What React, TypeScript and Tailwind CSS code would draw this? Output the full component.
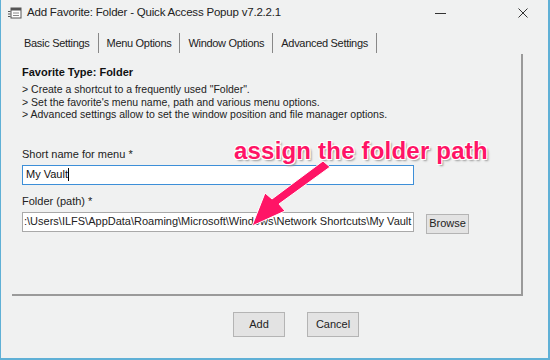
import React from 'react';

const font = { fontFamily: '"Liberation Sans", Arial, sans-serif' };

function TitleBar() {
  return (
    <div className="flex items-center h-[26px] pl-[7px] pr-[20px]">
      <svg width="14" height="12" viewBox="0 0 14 12" className="mr-[5px]">
        <rect x="3" y="1" width="10" height="10" fill="#fff" stroke="#555" strokeWidth="1" />
        <rect x="3" y="1" width="10" height="2.5" fill="#555" />
        <line x1="0" y1="4.5" x2="2.5" y2="4.5" stroke="#555" />
        <line x1="0" y1="7" x2="2.5" y2="7" stroke="#555" />
        <line x1="0" y1="9.5" x2="2.5" y2="9.5" stroke="#555" />
        <line x1="5" y1="6" x2="11" y2="6" stroke="#888" />
        <line x1="5" y1="8.5" x2="11" y2="8.5" stroke="#888" />
      </svg>
      <span className="text-[11.5px] text-[#222] tracking-[-0.2px]">Add Favorite: Folder - Quick Access Popup v7.2.2.1</span>
      <div className="flex-1" />
      <div className="w-[11px] h-px bg-[#333] mr-[72px]" />
      <svg width="10" height="10" viewBox="0 0 10 10">
        <path d="M0.5 0.5 L9.5 9.5 M9.5 0.5 L0.5 9.5" stroke="#333" strokeWidth="1" />
      </svg>
    </div>
  );
}

function Tabs() {
  const tabs = ['Basic Settings', 'Menu Options', 'Window Options', 'Advanced Settings'];
  return (
    <div className="flex items-center h-[28px] pt-[6px] pl-[23px]">
      {tabs.map((t) => (
        <div key={t} className="flex items-center">
          <span className="text-[11px] text-[#222] tracking-[-0.3px]">{t}</span>
          <div className="w-px h-[20px] bg-[#888] mx-[8px]" />
        </div>
      ))}
    </div>
  );
}

function Button({ label, w }: { label: string; w: string }) {
  return (
    <div className={`${w} h-[25px] flex items-center justify-center border border-[#b4b4b4] bg-[#e3e3e3] text-[11px] text-[#222]`}>
      {label}
    </div>
  );
}

export default function App() {
  return (
    <div className="relative w-[550px] h-[360px] bg-[#f0f1f1] border-l border-r-2 border-b-2 border-[#5fb0d6] overflow-hidden" style={font}>
      <TitleBar />
      <Tabs />
      <div className="ml-[11px] w-[511px] h-[242px] border-r-2 border-b-2 border-[#9a9a9a] pl-[10px] pt-[11px]">
        <div className="text-[11px] font-bold text-[#111] leading-[14px]">Favorite Type: Folder</div>
        <div className="mt-[4px] text-[10.5px] text-[#222] leading-[12.5px]">
          <div>&gt; Create a shortcut to a frequently used "Folder".</div>
          <div>&gt; Set the favorite's menu name, path and various menu options.</div>
          <div>&gt; Advanced settings allow to set the window position and file manager options.</div>
        </div>
        <div className="mt-[26px] text-[11px] text-[#222] leading-[14px]">Short name for menu *</div>
        <div className="mt-[4px] w-[392px] h-[20px] border border-[#3d8fd8] bg-white flex items-center pl-[3px] text-[11px] text-[#111]">
          My Vault<span className="w-px h-[13px] bg-black" />
        </div>
        <div className="mt-[9px] text-[11px] text-[#222] leading-[14px]">Folder (path) *</div>
        <div className="mt-[4px] flex items-start">
          <div className="w-[392px] h-[20px] border border-[#a9a9a9] bg-white flex items-center pl-[1px] text-[11px] text-[#222] overflow-hidden whitespace-nowrap">
            :\Users\ILFS\AppData\Roaming\Microsoft\Windows\Network Shortcuts\My Vault
          </div>
          <div className="ml-[12px] mt-[2px] w-[43px] h-[20px] border border-[#b4b4b4] bg-[#e3e3e3] flex items-center justify-center text-[11px] text-[#222]">
            Browse
          </div>
        </div>
      </div>
      <div className="flex gap-[22px] mt-[16px] pl-[232px]">
        <Button label="Add" w="w-[52px]" />
        <Button label="Cancel" w="w-[52px]" />
      </div>

      {/* annotation overlay */}
      <div
        className="absolute left-[233px] top-[139px] text-[24px] font-bold text-[#ff1466] leading-none whitespace-nowrap tracking-[0.2px]"
        style={{ fontFamily: '"Liberation Sans", Arial, sans-serif', textShadow: '1px 1px 0 #fff, -1px -1px 0 #fff, 1px -1px 0 #fff, -1px 1px 0 #fff, 2px 2px 2px #999' }}
      >
        assign the folder path
      </div>
      <svg className="absolute left-0 top-0" width="550" height="360" viewBox="0 0 550 360">
        <path
          d="M329 167 L278 204 L284 211 L251 226 L264 193 L271 199 L322 161 Z"
          fill="#ff1466"
          stroke="#fff"
          strokeWidth="1"
        />
      </svg>
    </div>
  );
}
